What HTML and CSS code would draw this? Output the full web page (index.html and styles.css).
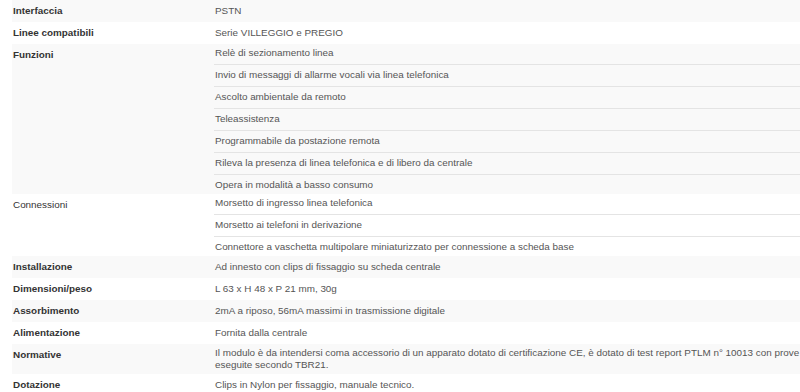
FILE: index.html
```html
<!DOCTYPE html>
<html lang="it">
<head>
<meta charset="utf-8">
<title>Caratteristiche tecniche</title>
<link rel="stylesheet" href="styles.css">
</head>
<body>
<div class="wrap">
<table class="specs">
  <colgroup><col class="c-label"><col class="c-value"></colgroup>
  <tbody>
    <tr><td class="label">Interfaccia</td><td class="value">PSTN</td></tr>
    <tr><td class="label">Linee compatibili</td><td class="value">Serie VILLEGGIO e PREGIO</td></tr>
    <tr><td class="label">Funzioni</td><td class="value list">
      <ul class="items">
        <li>Relè di sezionamento linea</li>
        <li>Invio di messaggi di allarme vocali via linea telefonica</li>
        <li>Ascolto ambientale da remoto</li>
        <li>Teleassistenza</li>
        <li>Programmabile da postazione remota</li>
        <li>Rileva la presenza di linea telefonica e di libero da centrale</li>
        <li>Opera in modalità a basso consumo</li>
      </ul>
    </td></tr>
    <tr><td class="label plain">Connessioni</td><td class="value list">
      <ul class="items">
        <li>Morsetto di ingresso linea telefonica</li>
        <li>Morsetto ai telefoni in derivazione</li>
        <li>Connettore a vaschetta multipolare miniaturizzato per connessione a scheda base</li>
      </ul>
    </td></tr>
    <tr><td class="label">Installazione</td><td class="value">Ad innesto con clips di fissaggio su scheda centrale</td></tr>
    <tr><td class="label">Dimensioni/peso</td><td class="value">L 63 x H 48 x P 21 mm, 30g</td></tr>
    <tr><td class="label">Assorbimento</td><td class="value">2mA a riposo, 56mA massimi in trasmissione digitale</td></tr>
    <tr><td class="label">Alimentazione</td><td class="value">Fornita dalla centrale</td></tr>
    <tr><td class="label">Normative</td><td class="value list">
      <ul class="items">
        <li>Il modulo è da intendersi coma accessorio di un apparato dotato di certificazione CE, è dotato di test report PTLM n° 10013 con prove eseguite secondo TBR21.</li>
      </ul>
    </td></tr>
    <tr><td class="label">Dotazione</td><td class="value">Clips in Nylon per fissaggio, manuale tecnico.</td></tr>
  </tbody>
</table>
</div>
</body>
</html>
```
FILE: styles.css
```css
html, body {
  margin: 0;
  padding: 0;
  overflow: hidden;
  background: #ffffff;
}

.wrap {
  padding-left: 12px;
}

.specs {
  border-collapse: collapse;
  width: 812px;
  table-layout: fixed;
  font-family: "Liberation Sans", Arial, sans-serif;
  font-size: 9.9px;
  line-height: 12px;
}

.c-label { width: 202px; }
.c-value { width: 610px; }

.specs tr:nth-child(odd) { background: #f9f9f9; }
.specs tr:nth-child(even) { background: #ffffff; }

.specs td {
  vertical-align: top;
  padding: 5px 0 5px 1px;
}

.label {
  font-weight: bold;
  color: #333333;
}

.label.plain {
  font-weight: normal;
}

.value {
  color: #555555;
}

.value.list {
  padding: 0;
}

.items {
  list-style: none;
  margin: 0;
  padding: 0;
}

.items li {
  padding: 4px 0 5px 1px;
  border-bottom: 1px solid #e4e4e4;
}

.items li:first-child {
  padding-top: 3px;
}

.items li:last-child {
  border-bottom: none;
  padding-bottom: 3px;
}
```
